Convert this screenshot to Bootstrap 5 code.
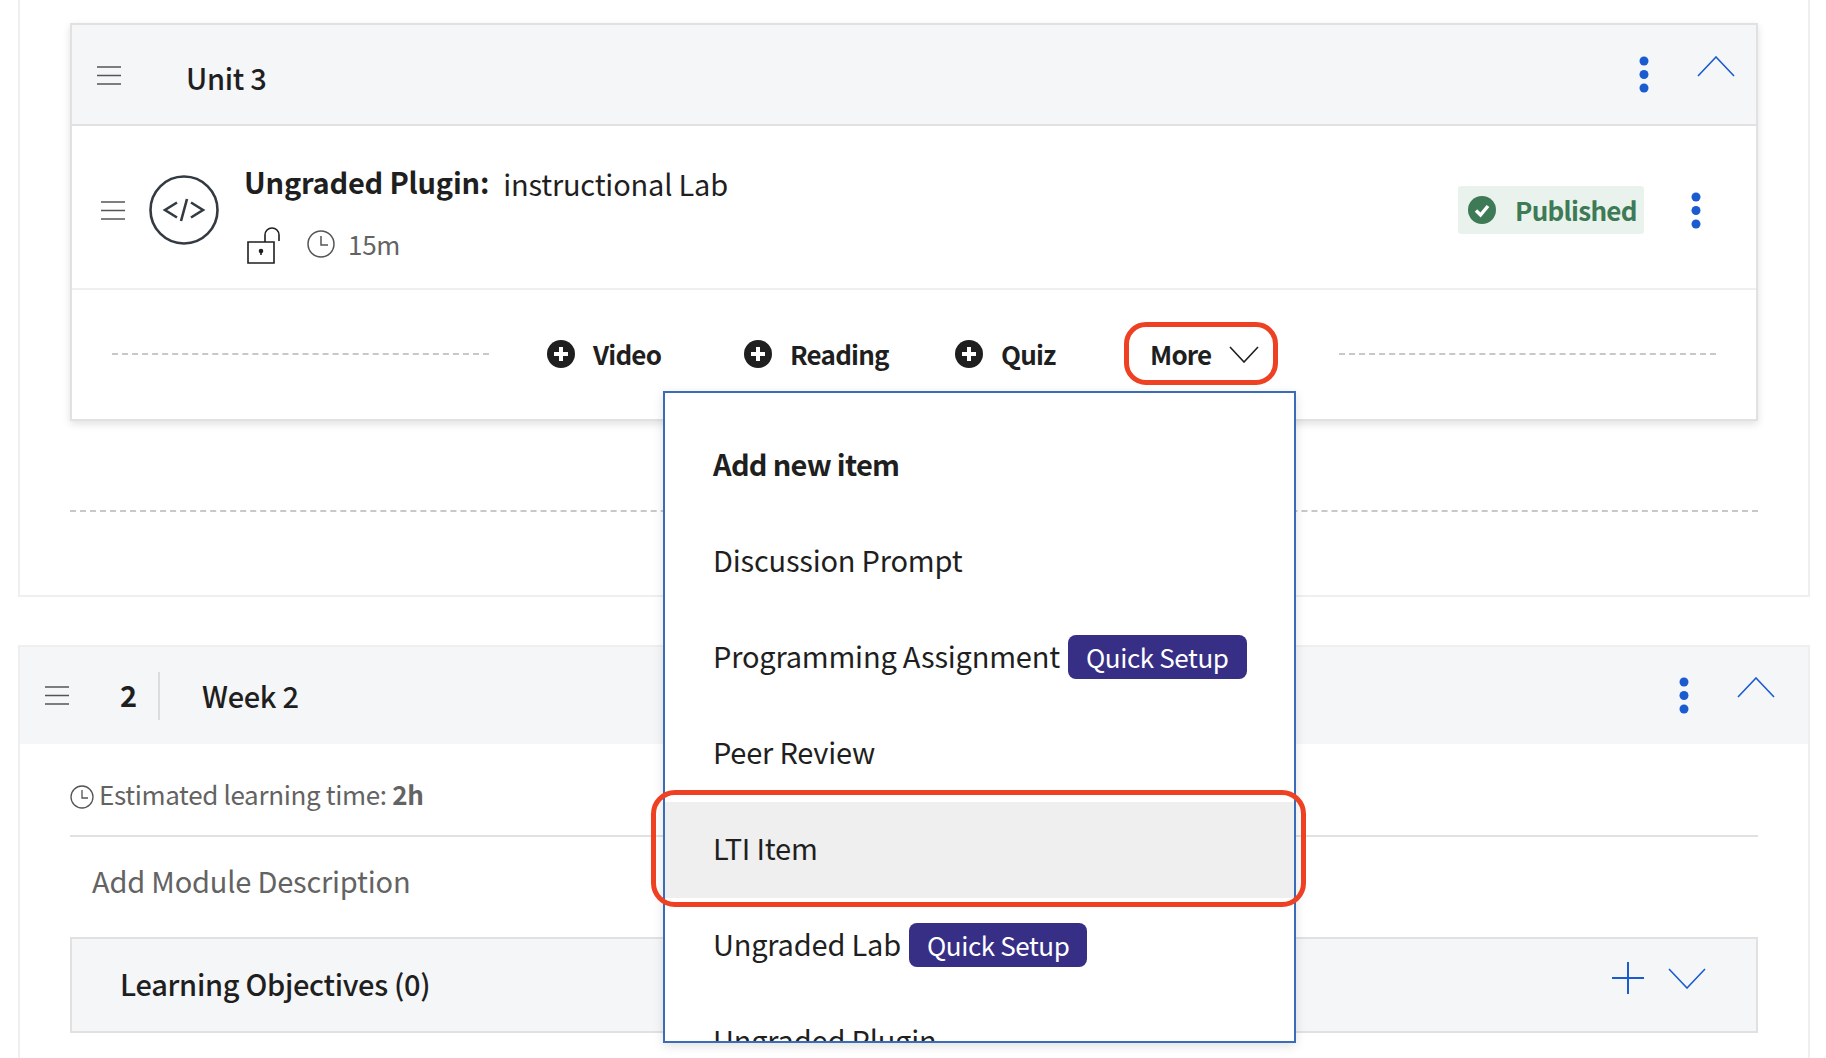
<!DOCTYPE html>
<html lang="en">

<head>
    <meta charset="UTF-8">
    <meta name="viewport" content="width=device-width, initial-scale=1.0">
    <title>Course outline</title>
    <link href="https://cdn.jsdelivr.net/npm/bootstrap@5.3.0/dist/css/bootstrap.min.css" rel="stylesheet">
    <style>
        body { font-family: "Noto Sans CJK SC", "Noto Sans", sans-serif; color: #1f1f1f; height: 1058px; overflow: hidden; position: relative; font-size: 28px; }
        .icon-blue { color: #1a5cd0; }
        .chevron-up { margin-bottom: 16px; }
        .week-panel { margin: 0 16px 0 18px; border: 2px solid #efefef; }
        .week-one { border-top: 0; height: 597px; padding: 23px 50px 0; margin-bottom: 48px; }
        .week-two { height: 414px; border-bottom: 0; }
        .unit-card { border: 2px solid #e1e1e1; border-radius: 0; box-shadow: 0 3px 8px rgba(0,0,0,.12); height: 398px; }
        .unit-head { background: #f5f6f8; border-bottom: 2px solid #e1e1e1; height: 102px; padding-left: 25px; padding-right: 21px; }
        .unit-lines { margin-top: 2px; }
        .unit-name { font-size: 29px; letter-spacing: -.3px; font-weight: 500; margin-left: 65px; margin-top: 5px; line-height: 1; }
        .unit-item { height: 164px; border-bottom: 2px solid #efefef; padding: 6px 55px 0 29px; }
        .item-icon { margin-left: 24px; }
        .item-text { margin-left: 25px; padding-top: 3px; }
        .title-row { height: 44px; }
        .item-title { font-size: 29px; letter-spacing: -.2px; font-weight: 700; line-height: 44px; }
        .item-name { font-size: 29px; letter-spacing: -.2px; font-weight: 400; line-height: 44px; margin: 2px 0 0 14px; }
        .item-meta { color: #636363; font-size: 26px; letter-spacing: -.3px; margin-top: 20px; }
        .lock-icon { margin: 4px 0 0 3px; }
        .clock-gap { margin-left: 26px; }
        .time-gap { margin-left: 13px; }
        .published { background: #e9f2ec; color: #3d7a55; font-weight: 600; height: 48px; width: 186px; border-radius: 3px; font-size: 26px; letter-spacing: -.7px; padding-left: 10px; margin-right: 47px; }
        .published span { margin-left: 19px; padding-bottom: 2px; }
        .add-row { height: 130px; padding: 0 40px; }
        .dash-line { width: 377px; border-top: 2px dashed #c8c8c8; }
        .add-btn { font-size: 26px; letter-spacing: -.8px; font-weight: 600; }
        .add-btn span { padding-bottom: 2px; }
        .add-btn span.add-label { margin-left: 18px; }
        .btn-video { width: 197px; margin-left: 58px; }
        .btn-reading { width: 211px; }
        .btn-quiz { width: 195px; }
        .btn-more { width: 189px; }
        .btn-more svg { margin-left: 18px; }
        .module-dash { border-top: 2px dashed #c8c8c8; margin-top: 89px; }
        .week-head { background: #f5f6f8; height: 97px; padding-left: 25px; padding-right: 33px; }
        .week-num { font-size: 29px; font-weight: 600; width: 91px; text-align: center; height: 48px; border-right: 2px solid #dcdcdc; line-height: 44px; padding-left: 30px; }
        .week-name { font-size: 29px; letter-spacing: -.3px; font-weight: 500; margin-left: 42px; }
        .week-body { padding: 0 50px; }
        .est-time { color: #636363; font-size: 26px; letter-spacing: -.35px; height: 93px; border-bottom: 2px solid #e1e1e1; padding-top: 8px; }
        .est-clock { margin: 7px 5px 0 0; }
        .add-desc { color: #636363; font-size: 29px; letter-spacing: -.2px; height: 100px; padding: 0 0 12px 22px; }
        .objectives { background: #f5f6f8; border: 2px solid #e1e1e1; height: 96px; padding: 0 50px 2px 48px; font-size: 29px; letter-spacing: -.3px; font-weight: 500; }
        .objectives .icon-blue { margin-bottom: 12px; }
        .add-menu { position: absolute; display: block; left: 663px; top: 391px; width: 633px; height: 652px; padding: 25px 0 0; border: 2px solid #3a6cb8; border-radius: 0; overflow: hidden; box-shadow: 0 3px 10px rgba(0,0,0,.12); }
        .add-menu .dropdown-header, .add-menu .dropdown-item { height: 96px; padding: 0 0 4px 48px; font-size: 29px; letter-spacing: -.2px; color: #1f1f1f; display: flex; align-items: center; }
        .add-menu .dropdown-header { font-weight: 600; letter-spacing: -.7px; }
        .add-menu .dropdown-item.is-hover { background: #efefef; }
        .setup-tag { background: #372f85; color: #fff; font-size: 26px; letter-spacing: -.4px; font-weight: 400; border-radius: 8px; height: 44px; padding: 0 18px 2px; margin: 2px 0 0 8px; display: inline-flex; align-items: center; }
        .note-box { position: absolute; border: 5px solid #ee4022; z-index: 1001; }
        .note-more { left: 1124px; top: 322px; width: 154px; height: 63px; border-radius: 22px; }
        .note-lti { left: 651px; top: 790px; width: 655px; height: 117px; border-radius: 24px; }
    </style>
</head>

<body>
    <!-- Week 1 -->
    <div class="week-panel week-one">
        <div class="card unit-card">
            <div class="unit-head d-flex align-items-center justify-content-between">
                <div class="d-flex align-items-center">
                    <svg class="unit-lines" width="24" height="19" viewBox="0 0 24 19" stroke="#555" stroke-width="1.5"><path d="M0 1h24M0 9.5h24M0 18h24"/></svg>
                    <span class="unit-name">Unit 3</span>
                </div>
                <div class="d-flex align-items-center icon-blue">
                    <svg width="10" height="37" viewBox="0 0 10 37" fill="currentColor"><circle cx="5" cy="5" r="4.5"/><circle cx="5" cy="18.5" r="4.5"/><circle cx="5" cy="32" r="4.5"/></svg>
                    <svg class="ms-5 chevron-up" width="38" height="21" viewBox="0 0 38 21" fill="none" stroke="currentColor" stroke-width="1.6"><path d="M1 20 19 1l18 19"/></svg>
                </div>
            </div>

            <div class="unit-item d-flex align-items-center">
                <svg width="24" height="19" viewBox="0 0 24 19" stroke="#555" stroke-width="1.5"><path d="M0 1h24M0 9.5h24M0 18h24"/></svg>
                <svg class="item-icon flex-shrink-0" width="70" height="70" viewBox="0 0 70 70" fill="none" stroke="#333a42" stroke-width="2.6"><circle cx="35" cy="35" r="33.5"/><path d="M28 27.5 16 35l12 7.500M42 27.5 54 35l-12 7.500M38 24l-6 22"/></svg>
                <div class="item-text flex-grow-1">
                    <div class="title-row d-flex align-items-start">
                        <span class="item-title">Ungraded Plugin:</span>
                        <span class="item-name">instructional Lab</span>
                    </div>
                    <div class="item-meta d-flex align-items-center">
                        <svg class="lock-icon" width="34" height="37" viewBox="0 0 34 37" fill="none" stroke="#1f1f1f" stroke-width="1.6"><path d="M1 15h26v21H1zM18 15V8a7 7 0 0 1 14 0v6"/><circle cx="14" cy="24" r="1.500" fill="#1f1f1f"/><path d="M14 24v4"/></svg>
                        <svg class="clock-gap" width="28" height="28" viewBox="0 0 28 28" fill="none" stroke="#555" stroke-width="1.500"><circle cx="14" cy="14" r="13"/><path d="M14 6v9h7"/></svg>
                        <span class="time-gap">15m</span>
                    </div>
                </div>
                <div class="published d-flex align-items-center">
                    <svg width="28" height="28" viewBox="0 0 28 28"><circle cx="14" cy="14" r="14" fill="#3d7a55"/><path d="M8 14.500l4.500 4.500L20 10" fill="none" stroke="#fff" stroke-width="3.500"/></svg>
                    <span>Published</span>
                </div>
                <svg class="icon-blue" width="10" height="37" viewBox="0 0 10 37" fill="currentColor"><circle cx="5" cy="5" r="4.500"/><circle cx="5" cy="18.500" r="4.500"/><circle cx="5" cy="32" r="4.500"/></svg>
            </div>

            <div class="add-row d-flex align-items-center">
                <div class="dash-line"></div>
                <div class="add-btn btn-video d-flex align-items-center">
                    <svg width="28" height="28" viewBox="0 0 28 28"><circle cx="14" cy="14" r="14" fill="#1f1f1f"/><path d="M14 7v14M7 14h14" stroke="#fff" stroke-width="4"/></svg>
                    <span class="add-label">Video</span>
                </div>
                <div class="add-btn btn-reading d-flex align-items-center">
                    <svg width="28" height="28" viewBox="0 0 28 28"><circle cx="14" cy="14" r="14" fill="#1f1f1f"/><path d="M14 7v14M7 14h14" stroke="#fff" stroke-width="4"/></svg>
                    <span class="add-label">Reading</span>
                </div>
                <div class="add-btn btn-quiz d-flex align-items-center">
                    <svg width="28" height="28" viewBox="0 0 28 28"><circle cx="14" cy="14" r="14" fill="#1f1f1f"/><path d="M14 7v14M7 14h14" stroke="#fff" stroke-width="4"/></svg>
                    <span class="add-label">Quiz</span>
                </div>
                <div class="add-btn btn-more d-flex align-items-center">
                    <span>More</span>
                    <svg width="30" height="17" viewBox="0 0 30 17" fill="none" stroke="#1f1f1f" stroke-width="1.600"><path d="M1 1l14 15L29 1"/></svg>
                </div>
                <div class="dash-line"></div>
            </div>
        </div>
        <div class="module-dash"></div>
    </div>

    <!-- Week 2 -->
    <div class="week-panel week-two">
        <div class="week-head d-flex align-items-center justify-content-between">
            <div class="d-flex align-items-center">
                <svg width="24" height="19" viewBox="0 0 24 19" stroke="#555" stroke-width="1.500"><path d="M0 1h24M0 9.500h24M0 18h24"/></svg>
                <span class="week-num">2</span>
                <span class="week-name">Week 2</span>
            </div>
            <div class="d-flex align-items-center icon-blue">
                <svg width="10" height="37" viewBox="0 0 10 37" fill="currentColor"><circle cx="5" cy="5" r="4.500"/><circle cx="5" cy="18.500" r="4.500"/><circle cx="5" cy="32" r="4.500"/></svg>
                <svg class="ms-5 chevron-up" width="38" height="21" viewBox="0 0 38 21" fill="none" stroke="currentColor" stroke-width="1.600"><path d="M1 20 19 1l18 19"/></svg>
            </div>
        </div>
        <div class="week-body">
            <div class="est-time d-flex align-items-center">
                <svg class="est-clock" width="24" height="24" viewBox="0 0 24 24" fill="none" stroke="#555" stroke-width="1.300"><circle cx="12" cy="12" r="11"/><path d="M12 5v8h6"/></svg>
                <span>Estimated learning time: <b class="fw-semibold">2h</b></span>
            </div>
            <div class="add-desc d-flex align-items-center">Add Module Description</div>
            <div class="objectives d-flex align-items-center justify-content-between">
                <span>Learning Objectives (0)</span>
                <div class="d-flex align-items-center icon-blue">
                    <svg width="32" height="32" viewBox="0 0 32 32" stroke="currentColor" stroke-width="2"><path d="M16 0v32M0 16h32"/></svg>
                    <svg class="ms-4" width="38" height="21" viewBox="0 0 38 21" fill="none" stroke="currentColor" stroke-width="1.600"><path d="M1 1l18 19L37 1"/></svg>
                </div>
            </div>
        </div>
    </div>

    <!-- Add new item menu -->
    <div class="dropdown-menu add-menu">
        <div class="dropdown-header">Add new item</div>
        <a class="dropdown-item" href="#">Discussion Prompt</a>
        <a class="dropdown-item" href="#">Programming Assignment<span class="setup-tag">Quick Setup</span></a>
        <a class="dropdown-item" href="#">Peer Review</a>
        <a class="dropdown-item is-hover" href="#">LTI Item</a>
        <a class="dropdown-item" href="#">Ungraded Lab<span class="setup-tag">Quick Setup</span></a>
        <a class="dropdown-item" href="#">Ungraded Plugin</a>
    </div>

    <!-- Red annotations -->
    <div class="note-box note-more"></div>
    <div class="note-box note-lti"></div>

    <script src="https://cdn.jsdelivr.net/npm/bootstrap@5.3.0/dist/js/bootstrap.bundle.min.js"></script>
</body>

</html>
